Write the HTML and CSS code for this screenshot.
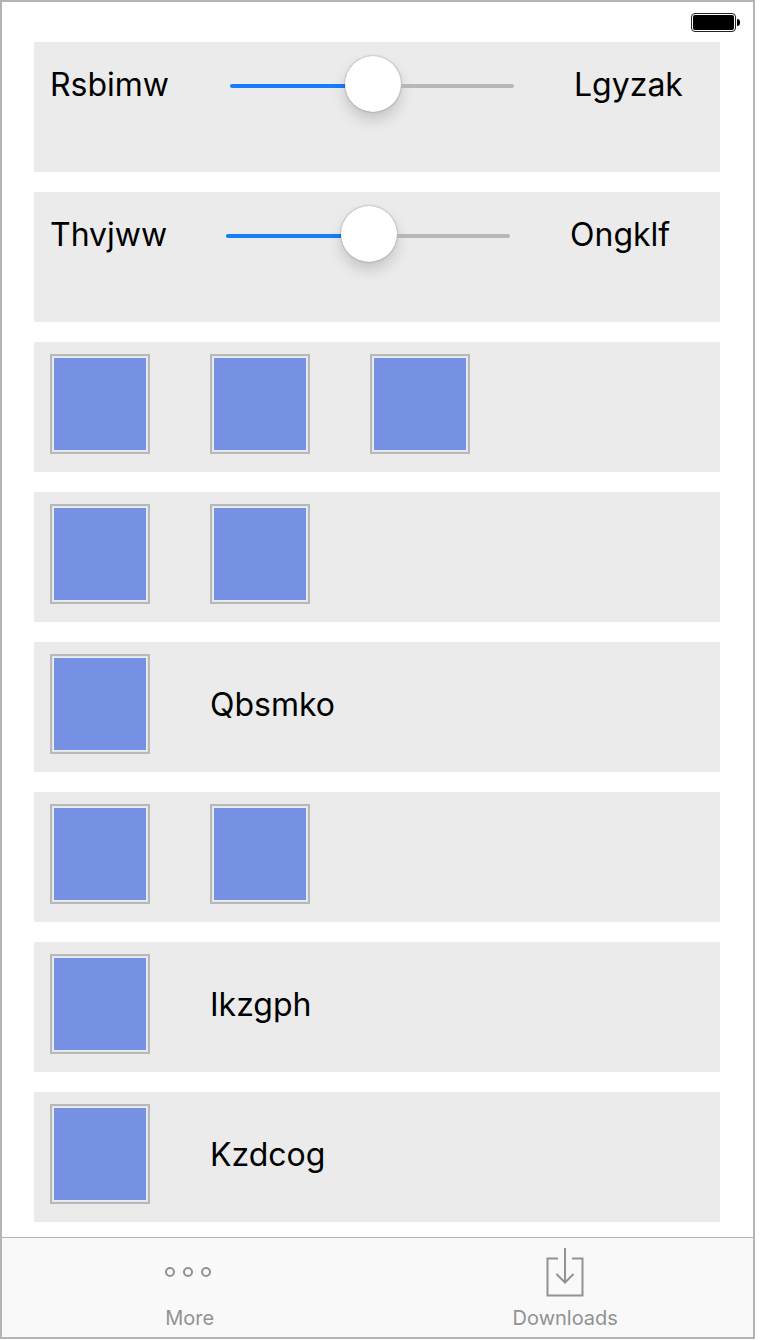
FILE: index.html
```html
<!DOCTYPE html>
<html lang="en">
<head>
  <meta charset="UTF-8">
  <meta name="viewport" content="width=device-width, initial-scale=1.0">
  <title>Components</title>
  <link rel="stylesheet" href="styles.css">
</head>
<body>

  <main class="frame">
    <div class="status">
      <div class="battery"><div class="battery-level"></div></div>
      <div class="battery-nub"></div>
    </div>

    <section class="list">
      <div class="row">
        <span class="label label-wide">Rsbimw</span>
        <div class="slider">
          <div class="fill"></div>
          <div class="thumb"></div>
          <div class="rest"></div>
        </div>
        <span class="label">Lgyzak</span>
      </div>

      <div class="row">
        <span class="label label-narrow">Thvjww</span>
        <div class="slider">
          <div class="fill"></div>
          <div class="thumb"></div>
          <div class="rest"></div>
        </div>
        <span class="label">Ongklf</span>
      </div>

      <div class="row row-pics">
        <div class="pic"><div class="pic-inner"></div></div>
        <div class="pic"><div class="pic-inner"></div></div>
        <div class="pic"><div class="pic-inner"></div></div>
      </div>

      <div class="row row-pics">
        <div class="pic"><div class="pic-inner"></div></div>
        <div class="pic"><div class="pic-inner"></div></div>
      </div>

      <div class="row row-pics">
        <div class="pic"><div class="pic-inner"></div></div>
        <span class="label">Qbsmko</span>
      </div>

      <div class="row row-pics">
        <div class="pic"><div class="pic-inner"></div></div>
        <div class="pic"><div class="pic-inner"></div></div>
      </div>

      <div class="row row-pics">
        <div class="pic"><div class="pic-inner"></div></div>
        <span class="label">Ikzgph</span>
      </div>

      <div class="row row-pics">
        <div class="pic"><div class="pic-inner"></div></div>
        <span class="label">Kzdcog</span>
      </div>
    </section>

    <nav class="tabs">
      <div class="tab">
        <svg class="tab-icon" width="60" height="50" viewBox="0 0 60 50">
          <g fill="none" stroke="#929292" stroke-width="2">
            <circle cx="10" cy="24" r="4"/>
            <circle cx="28" cy="24" r="4"/>
            <circle cx="46" cy="24" r="4"/>
          </g>
        </svg>
        <span class="tab-label">More</span>
      </div>
      <div class="tab">
        <svg class="tab-icon" width="60" height="50" viewBox="0 0 60 50">
          <g fill="none" stroke="#929292" stroke-width="2">
            <path d="M23 10.500H12.500V47.500H47.500V10.500H37"/>
            <path d="M30 0V35"/>
            <path d="M21.500 26L30 34.500L38.500 26"/>
          </g>
        </svg>
        <span class="tab-label">Downloads</span>
      </div>
    </nav>
  </main>

</body>
</html>
```

FILE: styles.css
```css
body {
  margin: 0;
  background-color: white;
  font-family: Inter, "Liberation Sans", sans-serif;
}
.frame {
  box-sizing: border-box;
  width: 755px;
  height: 1339px;
  border: 2px solid #b4b4b4;
  display: flex;
  flex-direction: column;
  background-color: white;
}

/* status bar */
.status {
  height: 40px;
  display: flex;
  justify-content: flex-end;
  align-items: flex-start;
  padding-top: 11px;
  padding-right: 13px;
  box-sizing: border-box;
}
.battery {
  box-sizing: border-box;
  width: 45px;
  height: 19px;
  border: 1px solid #222;
  border-radius: 4px;
  padding: 1px;
}
.battery-level {
  height: 100%;
  background-color: black;
  border-radius: 2px;
}
.battery-nub {
  width: 3px;
  height: 7px;
  margin-top: 6px;
  margin-left: 1px;
  background-color: black;
  border-radius: 0 3px 3px 0;
}

/* rows */
.list {
  display: grid;
  grid-gap: 20px;
  margin-left: 32px;
  width: 686px;
}
.row {
  box-sizing: border-box;
  height: 130px;
  background-color: #ebebeb;
  padding: 14px 16px;
  display: flex;
  align-items: flex-start;
  gap: 60px;
}
.row-pics {
  padding-top: 12px;
}
.label {
  font-size: 32px;
  line-height: 58px;
  color: black;
}
.label-wide {
  width: 120px;
}
.label-narrow {
  width: 116px;
}
.row-pics .label {
  line-height: 102px;
}

/* slider */
.slider {
  width: 284px;
  height: 56px;
  display: flex;
  align-items: flex-start;
}
.fill,
.rest {
  height: 4px;
  margin-top: 28px;
}
.fill {
  width: 115px;
  background-color: #147efb;
  border-radius: 2px 0 0 2px;
}
.rest {
  flex: 1;
  background-color: #b7b7b7;
  border-radius: 0 2px 2px 0;
}
.thumb {
  width: 56px;
  height: 56px;
  border-radius: 50%;
  background-color: white;
  box-shadow: 0 0 2px rgba(0, 0, 0, 0.4), 0 8px 14px rgba(0, 0, 0, 0.16);
}

/* picture squares */
.pic {
  box-sizing: border-box;
  width: 100px;
  height: 100px;
  border: 2px solid #b8b8b8;
  padding: 2px;
  background-color: #e4e4e6;
}
.pic-inner {
  height: 100%;
  background-color: #7690e3;
  box-shadow: 0 0 0 1px #e9eefc;
}

/* tab bar */
.tabs {
  margin-top: auto;
  height: 100px;
  box-sizing: border-box;
  border-top: 1px solid #b2b2b2;
  background-color: #f9f9f9;
  display: grid;
  grid-template-columns: 1fr 1fr;
}
.tab {
  display: flex;
  flex-direction: column;
  align-items: center;
  padding-top: 10px;
}
.tab-icon {
  display: block;
}
.tab-label {
  margin-top: 8px;
  font-size: 20px;
  line-height: 24px;
  color: #929292;
}
```
